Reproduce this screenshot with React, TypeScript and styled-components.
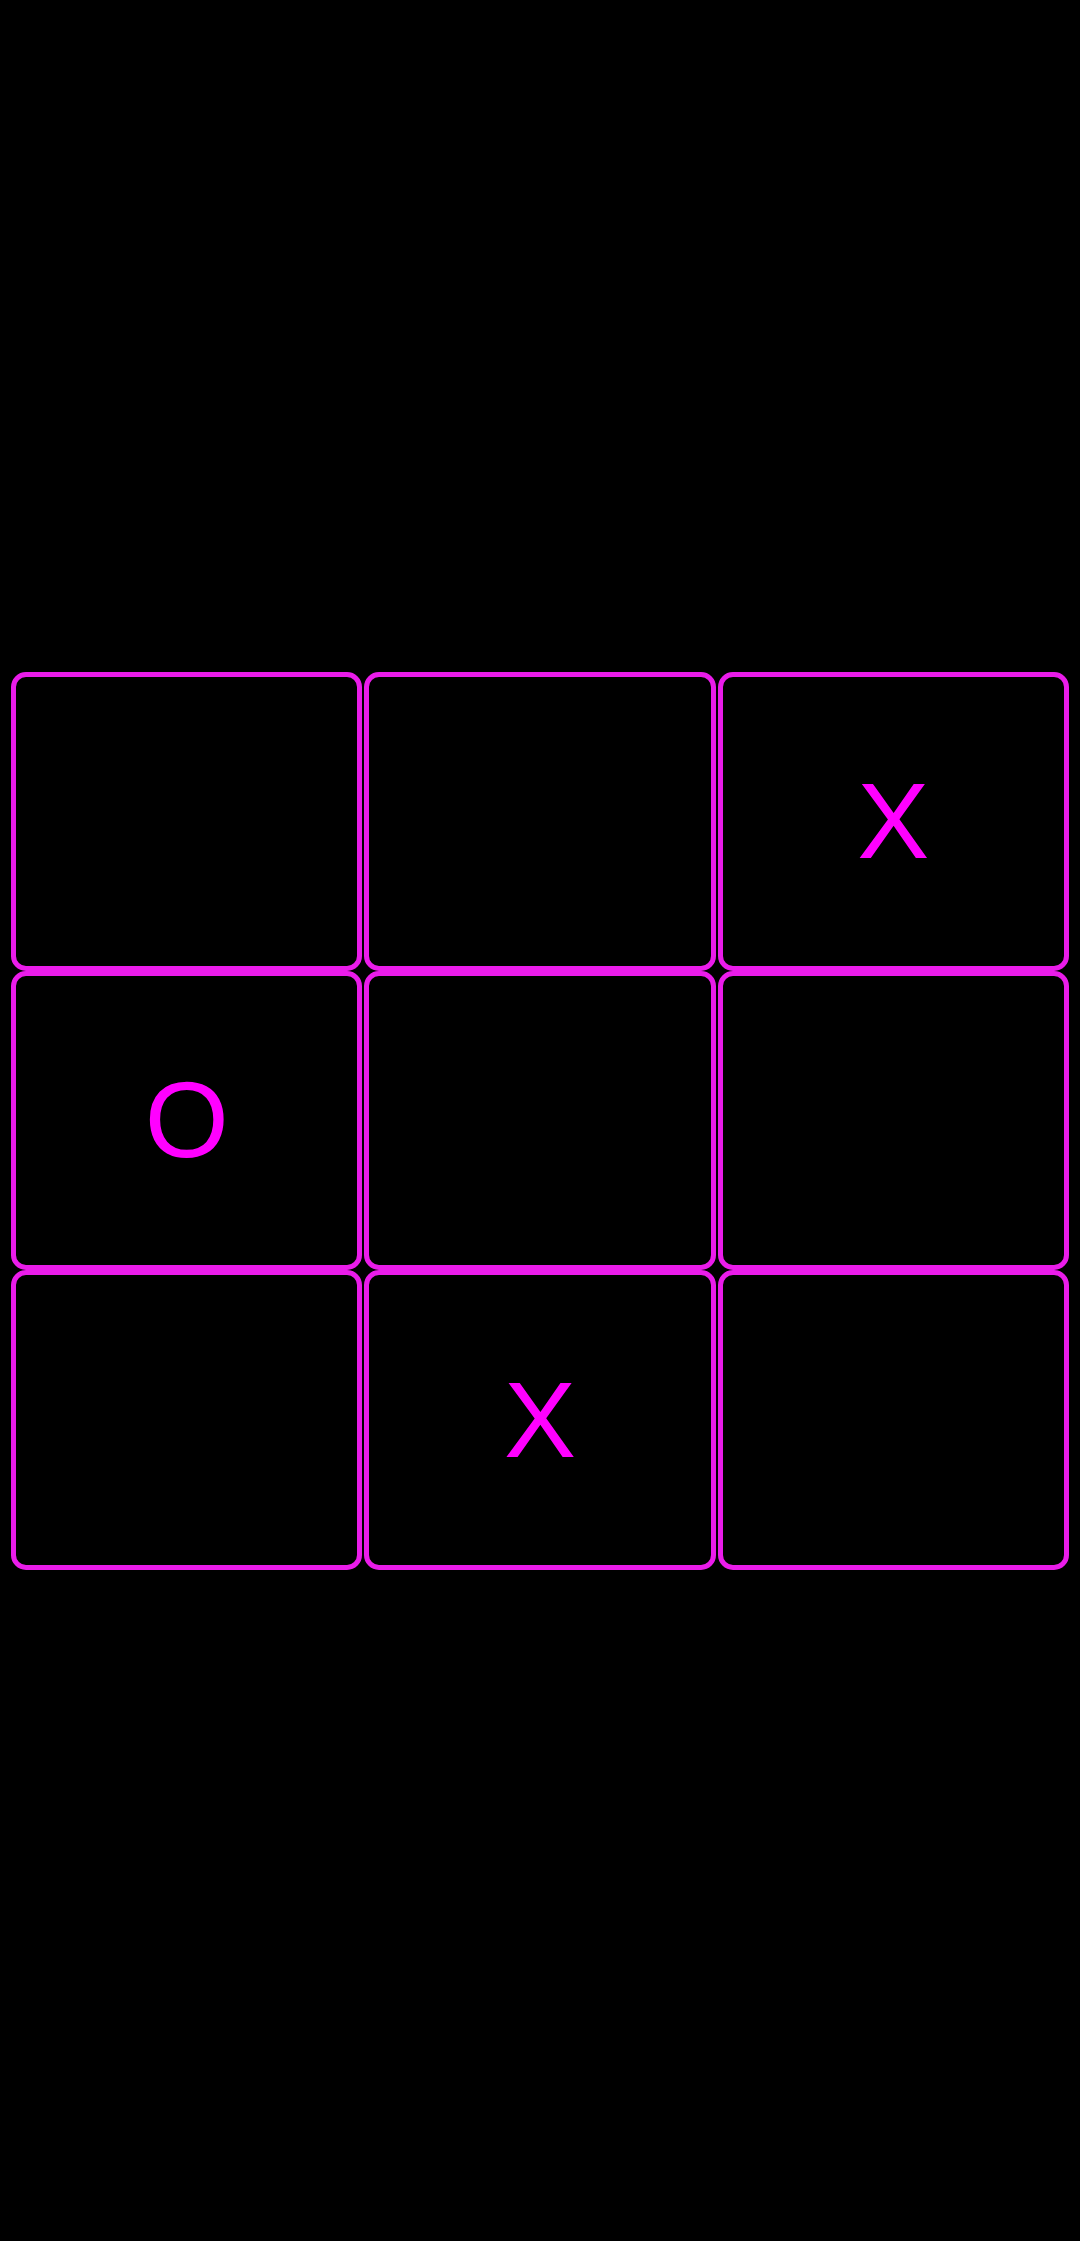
import React from 'react';
import styled, { createGlobalStyle } from 'styled-components';

type Mark = 'X' | 'O' | '';

const GlobalStyle = createGlobalStyle`
  html, body {
    margin: 0;
    padding: 0;
    background: #000000;
  }
`;

const Screen = styled.div`
  min-height: 100vh;
  display: flex;
  align-items: center;
  justify-content: center;
  padding: 0 11px;
  box-sizing: border-box;
  background: #000000;
`;

const Board = styled.div`
  width: 100%;
  height: 898px;
  display: grid;
  grid-template-columns: repeat(3, 1fr);
  grid-template-rows: repeat(3, 1fr);
  column-gap: 2px;
  row-gap: 0px;
`;

const Cell = styled.button<{ $filled: boolean }>`
  display: flex;
  align-items: center;
  justify-content: center;
  box-sizing: border-box;
  border: 5px solid #ea1cea;
  border-radius: 15px;
  background: #000000;
  padding: 0;
  margin: 0;
  color: #ff00ff;
  font-family: 'Liberation Sans', Arial, sans-serif;
  font-size: 108px;
  line-height: 1;
  cursor: ${(p) => (p.$filled ? 'default' : 'pointer')};
`;

const board: Mark[] = ['', '', 'X', 'O', '', '', '', 'X', ''];

export default function App() {
  return (
    <>
      <GlobalStyle />
      <Screen>
        <Board>
          {board.map((mark, i) => (
            <Cell key={i} $filled={mark !== ''}>
              {mark}
            </Cell>
          ))}
        </Board>
      </Screen>
    </>
  );
}
